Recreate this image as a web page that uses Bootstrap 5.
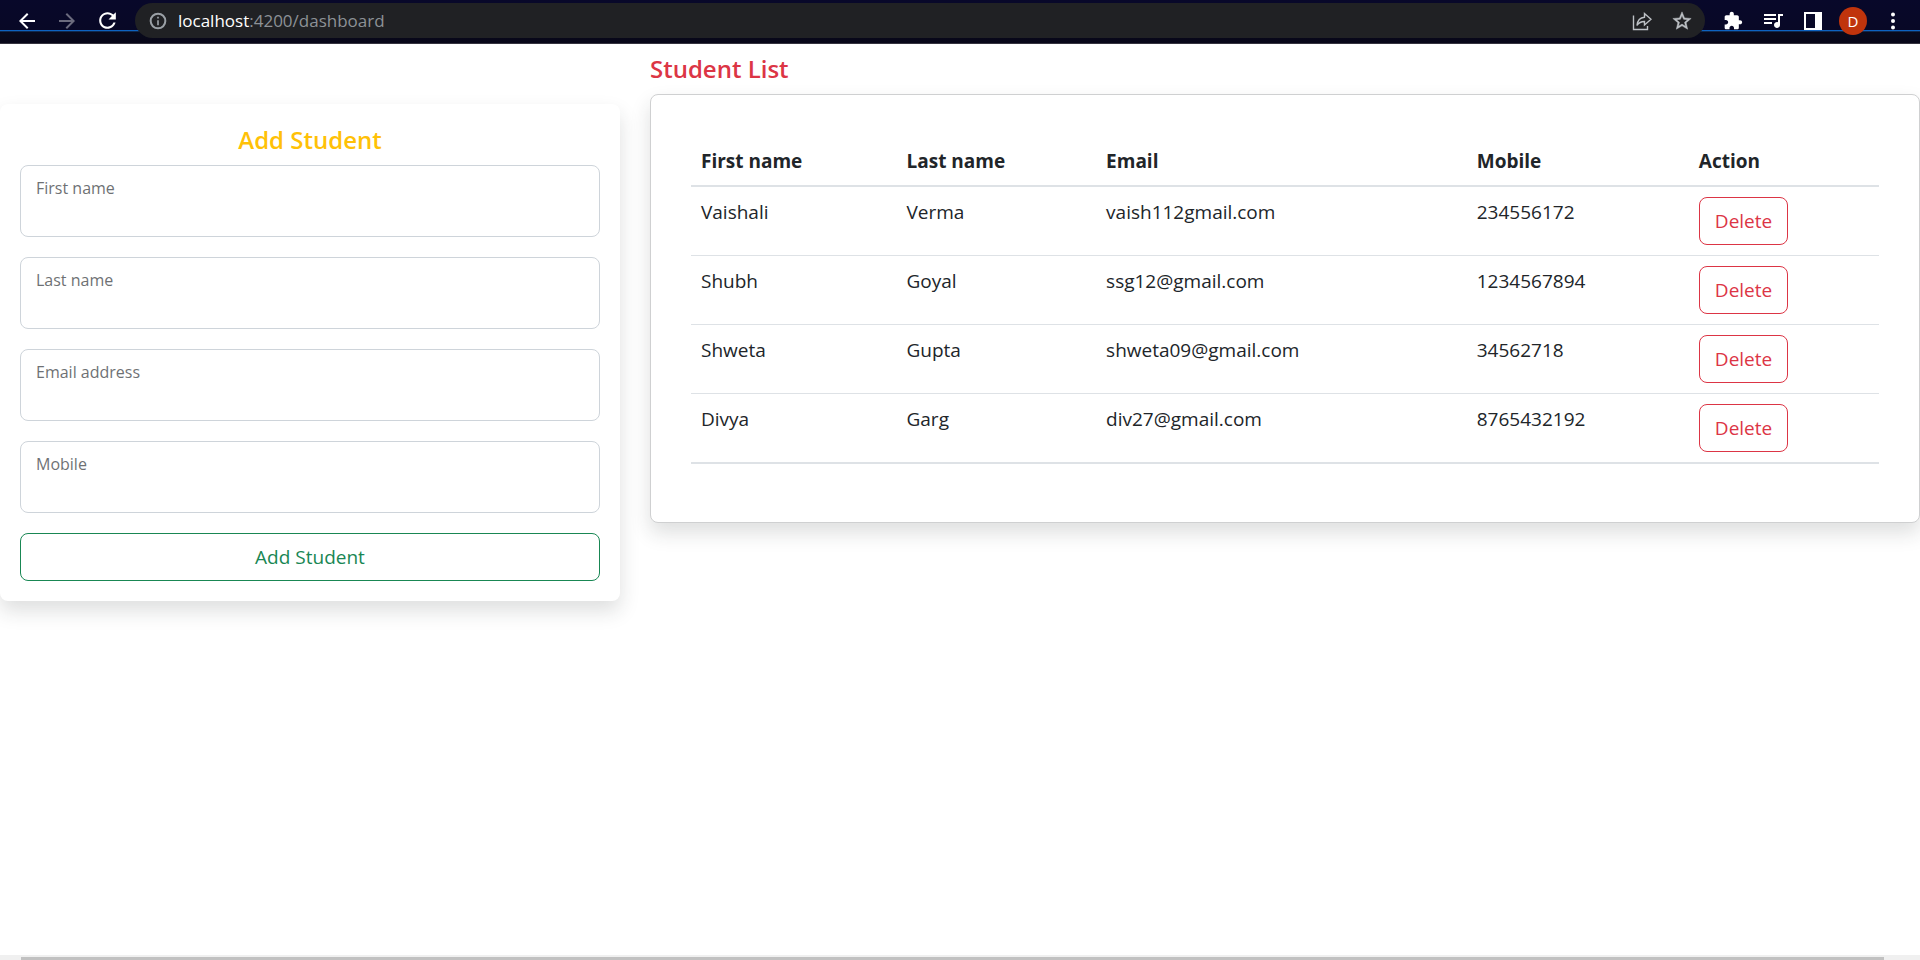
<!DOCTYPE html>
<html lang="en">
<head>
<meta charset="utf-8">
<meta name="viewport" content="width=device-width, initial-scale=1">
<title>Student dashboard</title>
<link href="https://cdn.jsdelivr.net/npm/bootstrap@5.3.0/dist/css/bootstrap.min.css" rel="stylesheet">
<style>
  html { font-size: 20px; }
  body { font-family: "Open Sans", "Noto Sans", sans-serif; font-size: 19px; line-height: 30px; color: #212529; background: #fff; }

  /* Browser toolbar */
  .toolbar { height: 44px; padding: 3px 12px 5px 12px; border-bottom: 1px solid #35333f; color: #fff;
    background: linear-gradient(#08082a 0, #080826 30px, #0d62bf 30px, #0d62bf 31px, #10294e 31px, #10294e 32px, #080a1c 32px, #080618 43px); }
  .tool { width: 30px; height: 34px; padding: 0; border: 0; background: none; color: inherit; display: flex; align-items: center; justify-content: center; flex: none; }
  .tool svg { display: block; fill: currentColor; }
  .tools-left { gap: 10px; margin-right: 13px; }
  .tools-right { gap: 10px; margin-left: 13px; }
  .address { height: 35px; border-radius: 18px; background: #202124; color: #9aa0a6; padding: 0 8px 0 8px; }
  .address .url { font-size: 17px; line-height: 34px; color: #8d9196; margin-left: 5px; }
  .address .host { color: #fff; }
  .avatar { width: 28px; height: 28px; border-radius: 50%; background: #c0340c; color: #fff; font: 15px/28px "Open Sans", sans-serif; }

  /* Dashboard */
  .title { font-size: 24px; line-height: 31px; font-weight: 600; margin-bottom: 10px; }
  .panel { border-radius: 8px; background: #fff; }
  .list-col { padding-top: 9px; }
  .list-panel { border: 1px solid #cfd0d1; }
  .field > .form-control { height: 72px; min-height: 0; border: 1px solid #ced4da; border-radius: 8px; }
  .field > label { font-size: 16px; line-height: 24px; padding: 10px 15px; color: #212529; opacity: .65; }
  .action { font-size: 19px; line-height: 30px; padding: 8px 15px; border-radius: 8px; }
  .students { table-layout: fixed; margin-bottom: 18px; }
  .students > :not(caption) > * > * { padding: 10px; border-color: #dee2e6; }
  .students > thead > tr > th { padding: 11px 10px 9px; }
  .students thead th, .students tbody tr:last-child td { border-bottom-width: 2px; }
  .students .c-first { width: 17.3%; }
  .students .c-last { width: 16.8%; }
  .students .c-mail { width: 31.2%; }
  .students .c-mobile { width: 18.7%; }

  .scroll-track { height: 5px; background: #f0f0f0; padding: 2px 36px 0 21px; }
  .scroll-thumb { height: 3px; background: #c1c1c1; }
</style>
</head>
<body class="d-flex flex-column min-vh-100 overflow-x-hidden">
  <header class="toolbar d-flex align-items-center">
    <nav class="tools-left d-flex" aria-label="History">
      <button class="tool" type="button" aria-label="Back"><svg width="24" height="24" viewBox="0 0 24 24"><path d="M20 11H7.83l5.59-5.59L12 4l-8 8 8 8 1.41-1.41L7.83 13H20v-2z"/></svg></button>
      <button class="tool" type="button" aria-label="Forward"><svg width="24" height="24" viewBox="0 0 24 24" opacity=".4"><path d="M12 4l-1.41 1.41L16.17 11H4v2h12.17l-5.58 5.59L12 20l8-8z"/></svg></button>
      <button class="tool" type="button" aria-label="Reload"><svg width="25" height="25" viewBox="0 0 24 24"><path d="M17.65 6.35C16.2 4.9 14.21 4 12 4c-4.42 0-7.99 3.58-7.99 8s3.57 8 7.99 8c3.73 0 6.84-2.55 7.73-6h-2.08c-.82 2.33-3.04 4-5.65 4-3.31 0-6-2.69-6-6s2.69-6 6-6c1.66 0 3.14.69 4.22 1.78L13 11h7V4l-2.35 2.35z"/></svg></button>
    </nav>
    <div class="address d-flex align-items-center flex-grow-1">
      <button class="tool" type="button" aria-label="Site information"><svg width="20" height="20" viewBox="0 0 24 24"><path d="M11 7h2v2h-2zm0 4h2v6h-2z"/><circle cx="12" cy="12" r="8.800" fill="none" stroke="currentColor" stroke-width="2.400"/></svg></button>
      <div class="url flex-grow-1"><span class="host">localhost</span>:4200/dashboard</div>
      <div class="d-flex gap-2">
        <button class="tool" type="button" aria-label="Share"><svg width="20" height="20" viewBox="0 0 20 20"><path d="M1.500 4.500V18.500H15.500V15M5 14.500C5.500 9 8 6.500 12.500 6.200V2.500L19 8.300L12.500 14V10.500C9 10.500 6.800 11.500 5 14.500Z" fill="none" stroke="#bdc1c6" stroke-width="1.400"/></svg></button>
        <button class="tool" type="button" aria-label="Bookmark"><svg width="22" height="22" viewBox="0 0 24 24" color="#bdc1c6"><path d="M22 9.240l-7.190-.62L12 2 9.190 8.630 2 9.240l5.460 4.730L5.820 21 12 17.270 18.180 21l-1.630-7.030L22 9.240zM12 15.400l-3.760 2.270 1-4.280-3.320-2.880 4.380-.38L12 6.100l1.710 4.040 4.380.38-3.320 2.880 1 4.280L12 15.400z" stroke="currentColor" stroke-width=".5"/></svg></button>
      </div>
    </div>
    <div class="tools-right d-flex">
      <button class="tool" type="button" aria-label="Extensions"><svg width="20" height="20" viewBox="0 0 24 24"><path d="M20.500 11H19V7c0-1.100-.9-2-2-2h-4V3.500C13 2.120 11.880 1 10.500 1S8 2.120 8 3.500V5H4c-1.100 0-1.990.9-1.990 2v3.800H3.500c1.490 0 2.700 1.210 2.700 2.700s-1.210 2.700-2.700 2.700H2V20c0 1.100.9 2 2 2h3.800v-1.500c0-1.490 1.210-2.700 2.700-2.700 1.490 0 2.700 1.210 2.700 2.700V22H17c1.100 0 2-.9 2-2v-4h1.500c1.380 0 2.500-1.120 2.500-2.500S21.880 11 20.500 11z"/></svg></button>
      <button class="tool" type="button" aria-label="Media controls"><svg width="24" height="24" viewBox="0 0 24 24"><path d="M15 5H3v2h12V5zm0 4H3v2h12V9zM3 15h8v-2H3v2zM17 5v8.180c-.31-.11-.65-.18-1-.18-1.660 0-3 1.340-3 3s1.340 3 3 3 3-1.340 3-3V7h3V5h-5z"/></svg></button>
      <button class="tool" type="button" aria-label="Side panel"><svg width="18" height="18" viewBox="0 0 18 18"><path d="M0 0h18v18H0zM2 2v14h9V2z" fill-rule="evenodd"/></svg></button>
      <button class="tool" type="button" aria-label="Profile"><span class="avatar">D</span></button>
      <button class="tool" type="button" aria-label="Menu"><svg width="6" height="18" viewBox="0 0 6 18"><circle cx="3" cy="2.500" r="2"/><circle cx="3" cy="9" r="2"/><circle cx="3" cy="15.500" r="2"/></svg></button>
    </div>
  </header>

  <main class="container-fluid p-0 flex-grow-1">
    <div class="row">
      <div class="col-4">
        <form class="panel shadow p-3 mt-5">
          <h5 class="title text-warning text-center">Add Student</h5>
          <div class="form-floating field mb-3"><input type="text" class="form-control" id="firstName" placeholder=" "><label for="firstName">First name</label></div>
          <div class="form-floating field mb-3"><input type="text" class="form-control" id="lastName" placeholder=" "><label for="lastName">Last name</label></div>
          <div class="form-floating field mb-3"><input type="email" class="form-control" id="email" placeholder=" "><label for="email">Email address</label></div>
          <div class="form-floating field mb-3"><input type="tel" class="form-control" id="mobile" placeholder=" "><label for="mobile">Mobile</label></div>
          <button type="button" class="btn btn-outline-success action w-100">Add Student</button>
        </form>
      </div>
      <div class="col-8 list-col">
        <h5 class="title text-danger">Student List</h5>
        <div class="panel list-panel shadow">
          <div class="px-4 mx-2 py-4 my-2">
            <table class="table students">
              <thead>
                <tr><th class="c-first" scope="col">First name</th><th class="c-last" scope="col">Last name</th><th class="c-mail" scope="col">Email</th><th class="c-mobile" scope="col">Mobile</th><th scope="col">Action</th></tr>
              </thead>
              <tbody>
                <tr><td>Vaishali</td><td>Verma</td><td>vaish112gmail.com</td><td>234556172</td><td><button type="button" class="btn btn-outline-danger action">Delete</button></td></tr>
                <tr><td>Shubh</td><td>Goyal</td><td>ssg12@gmail.com</td><td>1234567894</td><td><button type="button" class="btn btn-outline-danger action">Delete</button></td></tr>
                <tr><td>Shweta</td><td>Gupta</td><td>shweta09@gmail.com</td><td>34562718</td><td><button type="button" class="btn btn-outline-danger action">Delete</button></td></tr>
                <tr><td>Divya</td><td>Garg</td><td>div27@gmail.com</td><td>8765432192</td><td><button type="button" class="btn btn-outline-danger action">Delete</button></td></tr>
              </tbody>
            </table>
          </div>
        </div>
      </div>
    </div>
  </main>

  <div class="scroll-track"><div class="scroll-thumb"></div></div>
  <script src="https://cdn.jsdelivr.net/npm/bootstrap@5.3.0/dist/js/bootstrap.bundle.min.js"></script>
</body>
</html>
